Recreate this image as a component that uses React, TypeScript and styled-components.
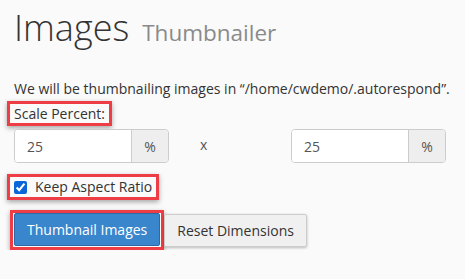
import React from 'react';
import styled, { createGlobalStyle } from 'styled-components';

const GlobalStyle = createGlobalStyle`
  html, body {
    margin: 0;
    padding: 0;
    background: #fafafa;
  }
  body {
    font-family: 'Open Sans', 'Liberation Sans', sans-serif;
    font-size: 14px;
    color: #333;
  }
`;

const Page = styled.div`
  padding: 0 14px;
  width: 465px;
  box-sizing: border-box;
`;

const Title = styled.h1`
  margin: 8px 0 0;
  font-size: 36px;
  font-weight: 300;
  line-height: 40px;
  color: #333;
  display: flex;
  align-items: baseline;
  gap: 13px;
`;

const SubTitle = styled.small`
  font-size: 22.5px;
  font-weight: 400;
  color: #8a8a8a;
`;

const Intro = styled.p`
  margin: 26px 0 0;
  line-height: 20px;
  white-space: nowrap;
`;

const Highlight = styled.div<{ $inset: number }>`
  display: inline-flex;
  align-items: center;
  border: 3px solid #ee3d44;
  box-shadow: 0 2px 5px rgba(0, 0, 0, 0.35);
  margin-left: ${(p) => -p.$inset}px;
  padding: 0 ${(p) => p.$inset - 3}px;
`;

const Label = styled.label`
  display: block;
  line-height: 19px;
  font-weight: 400;
`;

const FieldRow = styled.div`
  display: grid;
  grid-template-columns: 155px 122px 155px;
  margin-top: 3px;
`;

const InputGroup = styled.div`
  display: flex;
  height: 34px;
  box-sizing: border-box;
  border: 1px solid #ccc;
  border-radius: 4px;
  overflow: hidden;
  background: #fff;
`;

const NumberInput = styled.input`
  flex: 1;
  min-width: 0;
  border: none;
  outline: none;
  padding: 0 12px;
  font: inherit;
  font-size: 14px;
  color: #555;
  background: #fff;
`;

const Addon = styled.span`
  width: 36px;
  display: flex;
  align-items: center;
  justify-content: center;
  border-left: 1px solid #ccc;
  background: #eee;
  color: #555;
`;

const Times = styled.span`
  padding: 6px 0 0 31px;
  color: #555;
`;

const CheckRow = styled.div`
  margin-top: 11px;
`;

const CheckLabel = styled.label`
  display: flex;
  align-items: center;
  gap: 8px;
  line-height: 20px;
`;

const Check = styled.input`
  margin: 0;
  width: 13px;
  height: 13px;
  accent-color: #0a66d8;
`;

const Buttons = styled.div`
  display: flex;
  align-items: center;
  margin-top: 10px;
`;

const ButtonFrame = styled.div`
  border: 3px solid #ee3d44;
  box-shadow: 0 2px 5px rgba(0, 0, 0, 0.35);
  margin-left: -4px;
  padding: 0 1px 1px;
  display: flex;
`;

const Button = styled.button<{ $primary?: boolean }>`
  height: 33px;
  padding: 0 12px;
  font: inherit;
  font-size: 14px;
  border-radius: 2px;
  border: 1px solid ${(p) => (p.$primary ? '#2d6aa5' : '#ccc')};
  background: ${(p) => (p.$primary ? '#3a86cc' : '#f0f0f0')};
  color: ${(p) => (p.$primary ? '#fff' : '#333')};
  box-shadow: ${(p) => (p.$primary ? 'none' : '0 1px 3px rgba(0,0,0,0.25)')};
  cursor: pointer;
`;

export default function App() {
  return (
    <Page>
      <GlobalStyle />
      <Title>
        Images <SubTitle>Thumbnailer</SubTitle>
      </Title>
      <Intro>We will be thumbnailing images in “/home/cwdemo/.autorespond”.</Intro>
      <Highlight $inset={7} style={{ marginTop: 2 }}>
        <Label htmlFor="scale-x">Scale Percent:</Label>
      </Highlight>
      <FieldRow>
        <InputGroup>
          <NumberInput id="scale-x" defaultValue="25" />
          <Addon>%</Addon>
        </InputGroup>
        <Times>x</Times>
        <InputGroup>
          <NumberInput defaultValue="25" />
          <Addon>%</Addon>
        </InputGroup>
      </FieldRow>
      <CheckRow>
        <Highlight $inset={7}>
          <CheckLabel>
            <Check type="checkbox" defaultChecked />
            Keep Aspect Ratio
          </CheckLabel>
        </Highlight>
      </CheckRow>
      <Buttons>
        <ButtonFrame>
          <Button $primary>Thumbnail Images</Button>
        </ButtonFrame>
        <Button>Reset Dimensions</Button>
      </Buttons>
    </Page>
  );
}
